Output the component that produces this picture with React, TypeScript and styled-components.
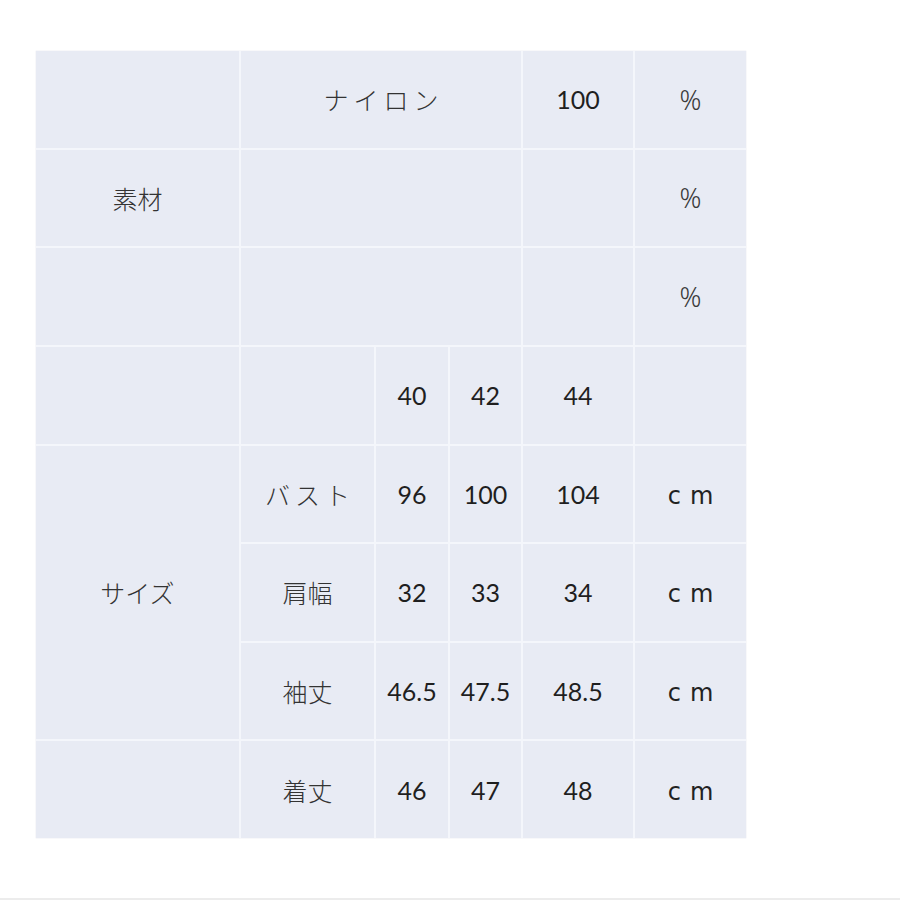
import React from 'react';
import styled, { createGlobalStyle } from 'styled-components';

const GlobalStyle = createGlobalStyle`
  html, body {
    margin: 0;
    padding: 0;
    background: #ffffff;
  }
`;

const Page = styled.div`
  height: 900px;
  display: flex;
  flex-direction: column;
  box-sizing: border-box;
  padding: 51px 0 0 36px;
`;

const Table = styled.div`
  width: 710px;
  height: 787px;
  display: grid;
  grid-template-columns: 203px 133px 72px 71px 110px 111px;
  grid-template-rows: repeat(8, 1fr);
  gap: 2px;
  background: #f4f6fb;
  box-shadow: 0 0 1px rgba(180, 186, 200, 0.5);
`;

const Cell = styled.div<{ $col: string; $row: string; $kind?: 'jp' | 'num' }>`
  grid-column: ${(p) => p.$col};
  grid-row: ${(p) => p.$row};
  background: #e8ebf4;
  display: flex;
  align-items: center;
  justify-content: center;
  color: ${(p) => (p.$kind === 'num' ? '#1f1f1f' : '#333333')};
  font-family: ${(p) =>
    p.$kind === 'num'
      ? "Lato, 'Noto Sans', sans-serif"
      : "'Noto Sans CJK JP', 'Noto Sans', sans-serif"};
  font-weight: ${(p) => (p.$kind === 'num' ? 400 : 300)};
  font-size: 25px;
`;

const Spaced = styled.span`
  letter-spacing: 5px;
  margin-right: -5px;
`;

const Unit = styled.span`
  font-family: 'DejaVu Sans', sans-serif;
  font-weight: 400;
  font-size: 24px;
  color: #222222;
  letter-spacing: 9px;
  margin-right: -9px;
  padding-top: 4px;
`;

const Percent = styled.span`
  font-family: 'Noto Sans', sans-serif;
  font-size: 27px;
  font-weight: 300;
  color: #3a3a3a;
`;

const Divider = styled.div`
  margin-top: auto;
  margin-left: -36px;
  height: 2px;
  background: #ececec;
`;

const sizes = [
  { label: 'バスト', values: ['96', '100', '104'], spaced: true },
  { label: '肩幅', values: ['32', '33', '34'] },
  { label: '袖丈', values: ['46.5', '47.5', '48.5'] },
  { label: '着丈', values: ['46', '47', '48'] },
];

export default function App() {
  return (
    <>
      <GlobalStyle />
      <Page>
        <Table>
          {/* 素材 */}
          <Cell $col="1" $row="1" />
          <Cell $col="2 / 5" $row="1" $kind="jp">
            <Spaced>ナイロン</Spaced>
          </Cell>
          <Cell $col="5" $row="1" $kind="num">100</Cell>
          <Cell $col="6" $row="1"><Percent>%</Percent></Cell>

          <Cell $col="1" $row="2" $kind="jp">素材</Cell>
          <Cell $col="2 / 5" $row="2" />
          <Cell $col="5" $row="2" />
          <Cell $col="6" $row="2"><Percent>%</Percent></Cell>

          <Cell $col="1" $row="3" />
          <Cell $col="2 / 5" $row="3" />
          <Cell $col="5" $row="3" />
          <Cell $col="6" $row="3"><Percent>%</Percent></Cell>

          {/* サイズ */}
          <Cell $col="1" $row="4" />
          <Cell $col="2" $row="4" />
          <Cell $col="3" $row="4" $kind="num">40</Cell>
          <Cell $col="4" $row="4" $kind="num">42</Cell>
          <Cell $col="5" $row="4" $kind="num">44</Cell>
          <Cell $col="6" $row="4" />

          <Cell $col="1" $row="5 / 8" $kind="jp">サイズ</Cell>
          <Cell $col="1" $row="8" />

          {sizes.map((s, i) => (
            <React.Fragment key={s.label}>
              <Cell $col="2" $row={`${i + 5}`} $kind="jp">
                {s.spaced ? <Spaced>{s.label}</Spaced> : s.label}
              </Cell>
              {s.values.map((v, j) => (
                <Cell key={j} $col={`${j + 3}`} $row={`${i + 5}`} $kind="num">
                  {v}
                </Cell>
              ))}
              <Cell $col="6" $row={`${i + 5}`}>
                <Unit>cm</Unit>
              </Cell>
            </React.Fragment>
          ))}
        </Table>
        <Divider />
      </Page>
    </>
  );
}
